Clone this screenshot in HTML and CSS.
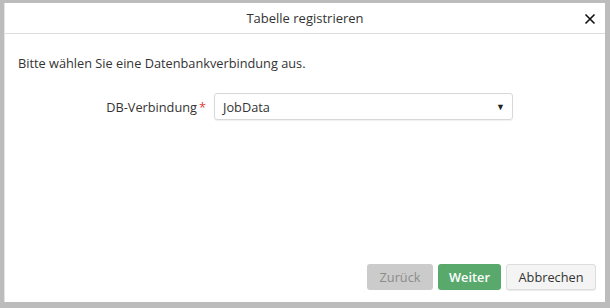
FILE: index.html
```html
<!DOCTYPE html>
<html>
<head>
<meta charset="utf-8">
<link rel="stylesheet" href="styles.css">
</head>
<body>
<div class="dialog">
  <div class="header">
    <span class="title">Tabelle registrieren</span>
    <span class="close"><svg width="12" height="12" viewBox="0 0 12 12"><path d="M1.5 1.5 L10.5 10.5 M10.5 1.5 L1.5 10.5" stroke="#111" stroke-width="1.6"/></svg></span>
  </div>
  <div class="content">
    <p class="intro">Bitte wählen Sie eine Datenbankverbindung aus.</p>
    <div class="row">
      <label class="label">DB-Verbindung<span class="req">*</span></label>
      <div class="select"><span>JobData</span><span class="arrow">▼</span></div>
    </div>
  </div>
  <div class="footer">
    <button class="btn btn-disabled">Zurück</button>
    <button class="btn btn-primary">Weiter</button>
    <button class="btn btn-default">Abbrechen</button>
  </div>
</div>
</body>
</html>
```
FILE: styles.css
```css
html, body { margin: 0; padding: 0; }
body {
  background: #bcbcbc;
  width: 610px;
  height: 308px;
  padding: 3px 5px 6px 4px;
  box-sizing: border-box;
  font-family: "Open Sans", "Liberation Sans", sans-serif;
  font-size: 12.75px;
  color: #333;
}
.dialog {
  background: #fff;
  border-left: 1px solid #e4e4e4;
  height: 299px;
  box-sizing: border-box;
  display: flex;
  flex-direction: column;
}
.header {
  height: 30px;
  border-bottom: 1px solid #ddd;
  display: flex;
  align-items: center;
  justify-content: center;
  position: relative;
}
.title { font-size: 13px; color: #333; }
.close {
  position: absolute;
  right: 9px;
  top: 10px;
  width: 12px;
  height: 12px;
  display: block;
}
.close svg { display: block; }
.content { flex: 1; padding: 0 13px; }
.intro { margin: 20px 0 0; line-height: 18px; }
.row {
  display: flex;
  align-items: center;
  margin-top: 21px;
}
.label {
  width: 196px;
  text-align: right;
  padding-right: 8px;
  box-sizing: border-box;
}
.req { color: #e04040; margin-left: 2px; }
.select {
  width: 299px;
  height: 27px;
  box-sizing: border-box;
  border: 1px solid #d8d8d8;
  border-radius: 3px;
  box-shadow: 0 1px 1px rgba(0,0,0,0.06);
  display: flex;
  align-items: center;
  justify-content: space-between;
  padding: 0 7px 0 8px;
}
.arrow { font-size: 9px; color: #222; }
.footer {
  display: flex;
  justify-content: flex-end;
  gap: 5px;
  padding: 0 9px 12px 0;
}
.btn {
  font-family: "Open Sans", "Liberation Sans", sans-serif;
  font-size: 12.75px;
  height: 26px;
  border-radius: 3px;
  border: 1px solid transparent;
  padding: 0 8px;
  box-sizing: border-box;
}
.btn-disabled { background: #cbcbcb; color: #8c8c8c; width: 66px; }
.btn-primary { background: #59a96d; color: #fff; font-weight: 600; width: 63px; }
.btn-default { background: #f4f4f4; color: #333; border-color: #ddd; width: 90px; box-shadow: 0 1px 1px rgba(0,0,0,0.08); }
```
